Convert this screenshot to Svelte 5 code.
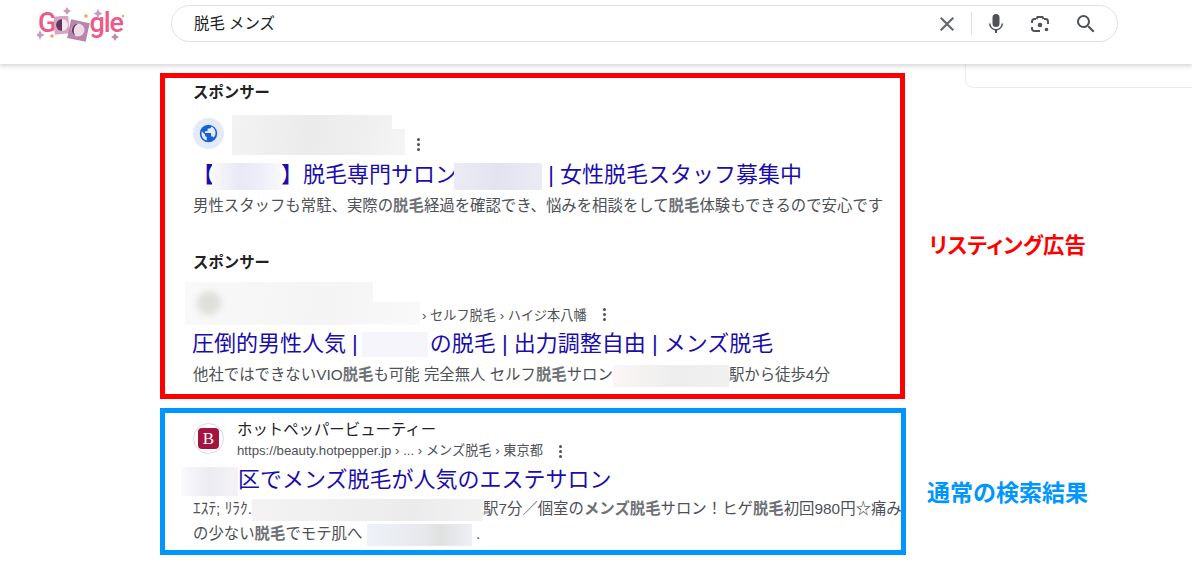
<script>
  const dots = [0, 1, 2];
</script>

<header class="topbar">
  <div class="logo">
    <svg class="sparkles" width="100" height="44" viewBox="0 0 100 44">
      <path d="M3 23l1.500 3.500 3.500 1.500-3.500 1.500-1.500 3.500-1.500-3.500-3.500-1.500 3.500-1.500z" fill="#c79ac2" />
      <path d="M30 0l1.500 2.500 2.500 1.500-2.500 1.500-1.500 2.500-1.500-2.500-2.500-1.500 2.500-1.500z" fill="#c79ac2" />
      <path d="M61 2l1.500 3 3 1.500-3 1.500-1.500 3-1.500-3-3-1.500 3-1.500z" fill="#c79ac2" />
      <path d="M78 26l1.500 2.500 2.500 1.500-2.500 1.500-1.500 2.500-1.500-2.500-2.500-1.500 2.500-1.500z" fill="#b98db4" />
      <circle cx="49" cy="9" r="1.800" fill="#f3a35c" />
      <circle cx="15" cy="29" r="1.800" fill="#f3a35c" />
      <circle cx="86" cy="9" r="1.200" fill="#f3a35c" />
    </svg>
    <span class="logo-g">G</span>
    <svg class="moons" width="36" height="26" viewBox="0 0 36 26">
      <rect x="0" y="0" width="15" height="18" fill="#d9a3c4" transform="rotate(-5 8 9)" />
      <circle cx="8" cy="9" r="6" fill="#f6e6ef" />
      <path d="M8 3a6 6 0 0 0 0 12z" fill="#5d3a62" />
      <rect x="15" y="5" width="19" height="19" fill="#b886ad" transform="rotate(12 24 14)" />
      <circle cx="24" cy="14" r="6.500" fill="#f0dce9" />
      <path d="M24 7.500a6.500 6.500 0 0 0-3 12 8.500 8.500 0 0 1 3-12z" fill="#5d3a62" />
    </svg>
    <span class="logo-g">gle</span>
  </div>

  <div class="searchbox">
    <span class="query">脱毛 メンズ</span>
    <div class="search-icons">
      <svg class="clear" width="24" height="24" viewBox="0 0 24 24" fill="#5f6368"><path d="M19 6.410 17.590 5 12 10.590 6.410 5 5 6.410 10.590 12 5 17.590 6.410 19 12 13.410 17.590 19 19 17.590 13.410 12z" /></svg>
      <span class="divider"></span>
      <svg class="mic" width="24" height="24" viewBox="0 0 24 24" fill="#4f5256"><path d="M12 15a3.500 3.500 0 0 0 3.500-3.500v-6a3.500 3.500 0 0 0-7 0v6A3.500 3.500 0 0 0 12 15z" /><path d="M17.500 11.500a5.500 5.500 0 0 1-11 0H5a7 7 0 0 0 6 6.900V21h2v-2.600a7 7 0 0 0 6-6.900z" /></svg>
      <svg class="lens" width="24" height="24" viewBox="0 0 24 24" fill="none" stroke="#4f5256" stroke-width="1.900">
        <path d="M8 7H6.500A2.500 2.500 0 0 0 4 9.500V11M4 15v1.500A2.500 2.500 0 0 0 6.500 19H12M20 12V9.500A2.500 2.500 0 0 0 17.500 7H16M8.500 7 9.500 5h5l1 2" />
        <circle cx="12" cy="13" r="2.300" fill="#4f5256" stroke="none" />
        <circle cx="18.500" cy="17.500" r="1.800" fill="#4f5256" stroke="none" />
      </svg>
      <svg class="magnify" width="24" height="24" viewBox="0 0 24 24" fill="#4f5256"><path d="M15.500 14h-.790l-.280-.270A6.470 6.470 0 0 0 16 9.500 6.500 6.500 0 1 0 9.500 16c1.610 0 3.090-.590 4.230-1.570l.270.280v.790l5 4.990L20.490 19zm-6 0C7.010 14 5 11.990 5 9.500S7.010 5 9.500 5 14 7.010 14 9.500 11.990 14 9.500 14z" /></svg>
    </div>
  </div>
</header>

<div class="side-card"></div>

<main class="page">
  <section class="annotated">
    <div class="box red">
      <h3 class="sponsor">スポンサー</h3>
      <div class="source first">
        <span class="favicon globe">
          <svg width="21" height="21" viewBox="0 0 24 24" fill="#1a5fd0"><path d="M12 2a10 10 0 1 0 0 20 10 10 0 0 0 0-20zM4 12c0-.900.150-1.800.440-2.600L8 13v1a2 2 0 0 0 2 2v3.900A8 8 0 0 1 4 12zm13.900 4.700A2 2 0 0 0 16 15.300h-1v-3a1 1 0 0 0-1-1H8V9.300h2a1 1 0 0 0 1-1v-2h2a2 2 0 0 0 2-2v-.400a8 8 0 0 1 2.900 12.800z" /></svg>
        </span>
        <div class="blur site-blur"></div>
        <span class="more first-more">{#each dots as d}<i></i>{/each}</span>
      </div>
      <div class="title first-title">【<span class="blur inline t1"></span>】脱毛専門サロン<span class="blur inline t2"></span> | 女性脱毛スタッフ募集中</div>
      <p class="desc first-desc">男性スタッフも常駐、実際の<b>脱毛</b>経過を確認でき、悩みを相談をして<b>脱毛</b>体験もできるので安心です</p>

      <h3 class="sponsor second">スポンサー</h3>
      <div class="source second-source">
        <div class="blur site-blur2"><span class="fav-blur"></span></div>
        <span class="crumbs">› セルフ脱毛 › ハイジ本八幡</span>
        <span class="more second-more">{#each dots as d}<i></i>{/each}</span>
      </div>
      <div class="title second-title">圧倒的男性人気 |<span class="blur inline t3"></span>の脱毛 | 出力調整自由 | メンズ脱毛</div>
      <p class="desc second-desc">他社ではできないVIO<b>脱毛</b>も可能 完全無人 セルフ<b>脱毛</b>サロン<span class="blur inline d1"></span>駅から徒歩4分</p>
    </div>
    <div class="label red-label">リスティング広告</div>
  </section>

  <section class="annotated blue-row">
    <div class="box blue">
      <div class="source organic">
        <span class="favicon brand"><span class="brand-mark">B</span></span>
        <div class="site-lines">
          <div class="site-name">ホットペッパービューティー</div>
          <div class="site-url">https://beauty.hotpepper.jp › ... › メンズ脱毛 › 東京都<span class="more organic-more">{#each dots as d}<i></i>{/each}</span></div>
        </div>
      </div>
      <div class="title organic-title"><span class="blur inline t4"></span>区でメンズ脱毛が人気のエステサロン</div>
      <p class="desc organic-desc">ｴｽﾃ; ﾘﾗｸ.<span class="blur inline d2"></span>駅7分／個室の<b>メンズ脱毛</b>サロン！ヒゲ<b>脱毛</b>初回980円☆痛み</p>
      <p class="desc organic-desc2">の少ない<b>脱毛</b>でモテ肌へ <span class="blur inline d3"></span> .</p>
    </div>
    <div class="label blue-label">通常の検索結果</div>
  </section>
</main>

<style>
  :global(body) {
    margin: 0;
    background: #fff;
    overflow: hidden;
    font-family: "Liberation Sans", "Noto Sans CJK JP", sans-serif;
  }

  .topbar {
    position: relative;
    z-index: 2;
    height: 64px;
    box-sizing: border-box;
    display: flex;
    padding-top: 5px;
    background: #fff;
    box-shadow: 0 2px 5px rgba(32, 33, 36, 0.2);
  }

  .logo {
    position: relative;
    width: 171px;
    height: 36px;
    padding-left: 38px;
    box-sizing: border-box;
    display: flex;
    align-items: center;
    color: #ee5a88;
    font-size: 27px;
    font-weight: 500;
    letter-spacing: -1px;
    font-family: "Roboto", sans-serif;
  }

  .sparkles {
    position: absolute;
    left: 37px;
    top: 2px;
  }

  .logo-g {
    line-height: 36px;
  }

  .moons {
    margin-left: -1px;
    margin-right: -1px;
    flex: none;
    position: relative;
    top: 6px;
  }

  .searchbox {
    width: 947px;
    height: 37px;
    box-sizing: border-box;
    border: 1px solid #dfe1e5;
    border-radius: 19px;
    display: flex;
    align-items: center;
    justify-content: space-between;
    padding: 0 19px 0 22px;
  }

  .query {
    font-size: 15.4px;
    color: #202124;
    position: relative;
    top: -2px;
  }

  .search-icons {
    display: flex;
    align-items: center;
  }

  .clear {
    margin-right: 12px;
  }

  .divider {
    width: 1px;
    height: 23px;
    background: #dfe1e5;
    margin-right: 12px;
  }

  .mic {
    margin-right: 20px;
  }

  .lens {
    margin-right: 22px;
  }

  .side-card {
    position: absolute;
    left: 965px;
    top: 56px;
    width: 240px;
    height: 32px;
    box-sizing: border-box;
    border: 1px solid #ebebeb;
    border-radius: 8px;
  }

  .page {
    padding: 9px 0 0 160px;
  }

  .annotated {
    display: flex;
    align-items: center;
  }

  .blue-row {
    margin-top: 9px;
  }

  .box {
    width: 745px;
    box-sizing: border-box;
    border: 5px solid #f00;
    overflow: hidden;
    padding-left: 28px;
    white-space: nowrap;
  }

  .red {
    height: 326px;
    padding-top: 4px;
  }

  .blue {
    width: 746px;
    height: 147px;
    border-color: #0096ff;
    padding-top: 7px;
    position: relative;
  }

  .label {
    font-weight: 700;
    white-space: nowrap;
  }

  .red-label {
    color: #f00;
    font-size: 21.4px;
    margin-left: 24px;
    position: relative;
    top: 7px;
    font-feature-settings: "palt";
  }

  .blue-label {
    color: #0096ff;
    font-size: 23px;
    margin-left: 21px;
    position: relative;
    top: 9px;
  }

  .sponsor {
    margin: 0;
    font-size: 15.4px;
    line-height: 22px;
    font-weight: 700;
    color: #202124;
  }

  .sponsor.second {
    margin-top: 35px;
  }

  .source {
    display: flex;
    position: relative;
  }

  .first {
    margin-top: 11px;
    height: 40px;
    align-items: flex-start;
  }

  .favicon {
    width: 31px;
    height: 31px;
    border-radius: 50%;
    display: flex;
    align-items: center;
    justify-content: center;
    flex: none;
    box-sizing: border-box;
  }

  .globe {
    background: #e3ebfb;
    margin-top: 3px;
  }

  .brand {
    border: 1px solid #dadce0;
    background: #fff;
  }

  .brand-mark {
    width: 21px;
    height: 21px;
    border-radius: 4px;
    background: #a5133f;
    color: #fff;
    display: flex;
    align-items: center;
    justify-content: center;
    font-family: "Liberation Serif", serif;
    font-size: 17px;
    line-height: 1;
  }

  .blur {
    background: linear-gradient(100deg, #f3f3f3, #ebebeb 45%, #f0f0f0 80%, #f5f5f5);
  }

  .inline {
    display: inline-block;
    vertical-align: middle;
  }

  .site-blur {
    width: 173px;
    height: 40px;
    margin-left: 8px;
    clip-path: polygon(0 0, 160px 0, 160px 14px, 173px 14px, 173px 100%, 0 100%);
  }

  .more {
    display: inline-flex;
    flex-direction: column;
    gap: 2px;
    width: 4px;
  }

  .more i {
    width: 3px;
    height: 3px;
    border-radius: 50%;
    background: #4d5156;
  }

  .first-more {
    margin: 23px 0 0 12px;
  }

  .title {
    font-size: 22px;
    line-height: 29px;
    color: #1a0dab;
  }

  .first-title {
    margin-top: 5px;
    margin-left: -1px;
  }

  .t1 {
    width: 69px;
    height: 27px;
    margin-left: -2px;
    background: linear-gradient(90deg, #f8f8fc, #e8e9f6 40%, #edeef8 70%, #f8f8fc);
  }

  .t2 {
    width: 88px;
    height: 27px;
    margin-left: -3px;
    background: linear-gradient(90deg, #ebebf5, #e3e3f0 50%, #ebebf5);
  }

  .desc {
    margin: 7px 0 0;
    font-size: 15.4px;
    line-height: 22px;
    color: #4d5156;
  }

  .desc b {
    color: #6f7276;
  }

  .first-desc {
    margin-top: 5px;
  }

  .second-source {
    margin-top: 8px;
    height: 43px;
    margin-left: -8px;
  }

  .site-blur2 {
    width: 235px;
    height: 43px;
    display: flex;
    align-items: center;
    padding-left: 12px;
    box-sizing: border-box;
    background: linear-gradient(100deg, #f9f9f9, #f4f4f4 60%, #f9f9f9);
    clip-path: polygon(0 0, 188px 0, 188px 20px, 235px 20px, 235px 100%, 0 100%);
  }

  .fav-blur {
    width: 24px;
    height: 24px;
    border-radius: 50%;
    background: #dfdfdc;
    filter: blur(3px);
  }

  .crumbs {
    font-size: 13.2px;
    line-height: 16px;
    color: #4d5156;
    margin: 26px 0 0 2px;
  }

  .second-more {
    margin: 26px 0 0 16px;
  }

  .second-title {
    margin-top: 4px;
    margin-left: -1px;
  }

  .t3 {
    width: 66px;
    height: 25px;
    margin: 0 2px 0 4px;
    background: #f5f5fb;
  }

  .second-desc {
    margin-top: 6px;
  }

  .d1 {
    width: 116px;
    height: 22px;
    background: linear-gradient(90deg, #fcf5f5, #eeeeee 50%, #f0f0f0);
  }

  .organic {
    align-items: flex-start;
    height: 43px;
    margin-top: 3px;
  }

  .site-lines {
    margin-left: 13px;
    margin-top: -3px;
  }

  .site-name {
    font-size: 15.4px;
    line-height: 20px;
    color: #202124;
  }

  .site-url {
    font-size: 13.2px;
    line-height: 22px;
    color: #4d5156;
    display: flex;
    align-items: center;
  }

  .organic-more {
    margin-left: 16px;
  }

  .organic-title {
    margin-top: -1px;
    margin-left: -12px;
    white-space: nowrap;
  }

  .t4 {
    width: 57px;
    height: 29px;
    background: linear-gradient(90deg, #fafafc, #ebebf2 50%, #f3f3f7);
  }

  .organic-desc {
    margin-top: 2px;
  }

  .d2 {
    width: 231px;
    height: 22px;
    background: linear-gradient(90deg, #f3f3f3, #eeeeee 50%, #ebebeb 70%, #f2f2f2);
  }

  .organic-desc2 {
    margin-top: 2px;
  }

  .d3 {
    width: 105px;
    height: 22px;
    background: linear-gradient(90deg, #eef1f7, #e6e8ec 55%, #e0e0e0 70%, #ecf0f6);
  }
</style>
